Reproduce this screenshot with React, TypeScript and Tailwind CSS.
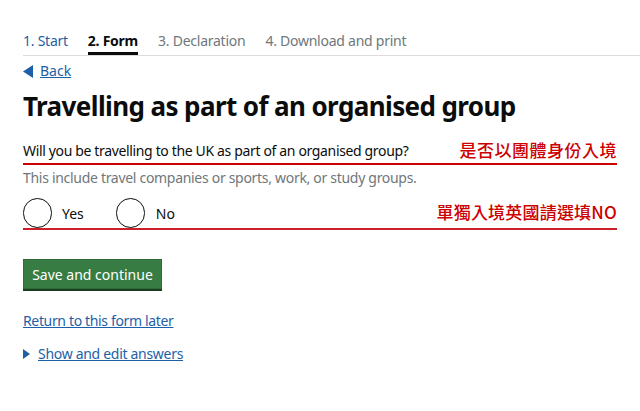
export default function App() {
  const sans = { fontFamily: '"Noto Sans", "Liberation Sans", sans-serif' };
  const cjk = { fontFamily: '"Noto Sans CJK TC", sans-serif' };
  return (
    <div className="w-[640px] h-[411px] bg-white overflow-hidden" style={sans}>
      <div className="pl-[23px] pt-[31px]">
        <nav className="flex gap-[20px] border-b border-[#dcdcdc] text-[14px] leading-[20px] tracking-[-0.25px]">
          <span className="pb-[3px] text-[#1d5fa8]">1. Start</span>
          <span className="pb-[1px] font-bold text-[#0b0c0c] border-b-[3px] border-[#0b0c0c]">2. Form</span>
          <span className="pb-[3px] text-[#6f777b]">3. Declaration</span>
          <span className="pb-[3px] text-[#6f777b]">4. Download and print</span>
        </nav>
        <a href="#" className="mt-[6px] flex items-center gap-[7px] text-[14px] leading-[18px] text-[#1d5fa8]">
          <svg width="10" height="13" viewBox="0 0 10 13"><path d="M0 6.5 10 0v13z" fill="#1d5fa8" /></svg>
          <span className="underline">Back</span>
        </a>
        <h1 className="mt-[9px] text-[26px] leading-[34px] font-bold tracking-[-0.6px] text-[#0b0c0c]">
          Travelling as part of an organised group
        </h1>
        <div className="mr-[23px] mt-[16px]">
          <div className="flex items-end justify-between border-b-2 border-[#cc0000] pb-[2px]">
            <span className="mb-[1px] text-[14px] leading-[18px] tracking-[-0.35px] text-[#0b0c0c]">Will you be travelling to the UK as part of an organised group?</span>
            <span className="text-[17px] leading-[22px] tracking-[0.5px] font-medium text-[#cc0000]" style={cjk}>是否以團體身份入境</span>
          </div>
          <p className="mt-[4px] text-[14px] leading-[18px] tracking-[-0.3px] text-[#6f777b]">This include travel companies or sports, work, or study groups.</p>
          <div className="mt-[11px] flex items-center justify-between border-b-2 border-[#cc1f2a]">
            <div className="flex items-center">
              <span className="w-[29px] h-[30px] rounded-full border-[1.5px] border-[#0b0c0c]" />
              <span className="ml-[10px] text-[14px] text-[#0b0c0c]">Yes</span>
              <span className="ml-[32px] w-[29px] h-[30px] rounded-full border-[1.5px] border-[#0b0c0c]" />
              <span className="ml-[11px] text-[14px] text-[#0b0c0c]">No</span>
            </div>
            <span className="mb-[3px] text-[17px] leading-[22px] tracking-[0.2px] font-medium text-[#cc0000]" style={cjk}>單獨入境英國請選填NO</span>
          </div>
        </div>
        <button className="mt-[29px] w-[139px] h-[30px] bg-[#377c42] text-white text-[14px] shadow-[0_2px_0_#1a3d1f] border border-[#2f6b39]">
          Save and continue
        </button>
        <div className="mt-[19px]">
          <a href="#" className="text-[14px] leading-[18px] tracking-[-0.35px] text-[#1d5fa8] underline">Return to this form later</a>
        </div>
        <div className="mt-[13px] flex items-center gap-[8px] text-[14px] leading-[18px] tracking-[-0.3px] text-[#1d5fa8]">
          <svg width="7" height="10" viewBox="0 0 7 10"><path d="M0 0 7 5 0 10z" fill="#1d5fa8" /></svg>
          <a href="#" className="underline">Show and edit answers</a>
        </div>
      </div>
    </div>
  );
}
